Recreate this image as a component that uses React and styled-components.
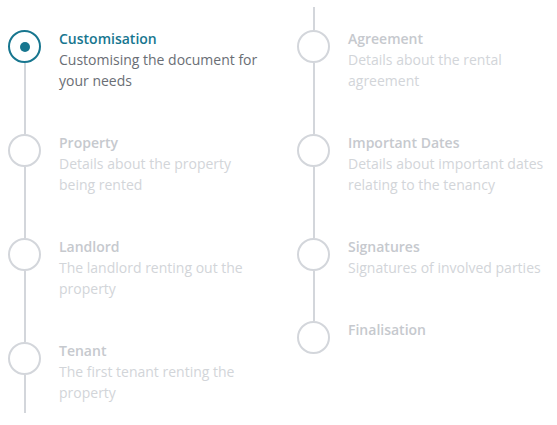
import React from "react";
import styled, { createGlobalStyle } from "styled-components";

const Global = createGlobalStyle`
  html, body { margin: 0; padding: 0; background: #ffffff; }
  body { font-family: "Open Sans", "Noto Sans", sans-serif; }
`;

const ACTIVE = "#17768f";
const LINE = "#d3d6db";

const Page = styled.div`
  display: flex;
  width: 557px;
  height: 425px;
  box-sizing: border-box;
  padding-left: 8px;
`;

const Column = styled.ol`
  list-style: none;
  margin: 0;
  padding: ${(p) => p.$padTop}px 0 0 0;
  width: ${(p) => p.$width}px;
  display: flex;
  flex-direction: column;
`;

const Tail = styled.li`
  width: 2px;
  height: ${(p) => p.$h}px;
  margin-left: 15.5px;
  background: ${LINE};
`;

const Step = styled.li`
  display: grid;
  grid-template-columns: 33px 1fr;
  column-gap: 18px;
`;

const Rail = styled.div`
  display: flex;
  flex-direction: column;
  align-items: center;
`;

const Seg = styled.div`
  width: 2px;
  height: ${(p) => (p.$grow ? "auto" : `${p.$h}px`)};
  flex: ${(p) => (p.$grow ? 1 : "none")};
  background: ${(p) => (p.$hidden ? "transparent" : LINE)};
`;

const Circle = styled.div`
  width: 33px;
  height: 33px;
  box-sizing: border-box;
  border-radius: 50%;
  border: 2px solid ${(p) => (p.$active ? ACTIVE : LINE)};
  display: flex;
  align-items: center;
  justify-content: center;
  flex: none;
`;

const Dot = styled.span`
  width: 10px;
  height: 10px;
  border-radius: 50%;
  background: ${ACTIVE};
`;

const Body = styled.div`
  padding-bottom: ${(p) => p.$pb}px;
  font-size: 14px;
  line-height: 21px;
  white-space: nowrap;
`;

const Title = styled.div`
  font-weight: 600;
  color: ${(p) => (p.$active ? ACTIVE : "#c6c9ce")};
`;

const Desc = styled.div`
  color: ${(p) => (p.$active ? "#6a6e75" : "#d2d5d9")};
`;

function StepItem({ title, desc, active, first, last, pb = 41 }) {
  return (
    <Step>
      <Rail>
        <Seg $h={2} $hidden={first} />
        <Circle $active={active}>{active && <Dot />}</Circle>
        <Seg $grow $hidden={last} />
      </Rail>
      <Body $pb={pb}>
        <Title $active={active}>{title}</Title>
        {desc && <Desc $active={active}>{desc}</Desc>}
      </Body>
    </Step>
  );
}

export default function App() {
  return (
    <>
      <Global />
      <Page>
        <Column $padTop={28} $width={289}>
          <StepItem
            active
            first
            title="Customisation"
            desc={<>Customising the document for<br />your needs</>}
          />
          <StepItem
            title="Property"
            desc={<>Details about the property<br />being rented</>}
          />
          <StepItem
            title="Landlord"
            desc={<>The landlord renting out the<br />property</>}
          />
          <StepItem
            title="Tenant"
            pb={10}
            desc={<>The first tenant renting the<br />property</>}
          />
        </Column>
        <Column $padTop={7} $width={260}>
          <Tail $h={21} />
          <StepItem
            title="Agreement"
            desc={<>Details about the rental<br />agreement</>}
          />
          <StepItem
            title="Important Dates"
            desc={<>Details about important dates<br />relating to the tenancy</>}
          />
          <StepItem title="Signatures" desc="Signatures of involved parties" />
          <StepItem title="Finalisation" last pb={0} />
        </Column>
      </Page>
    </>
  );
}
